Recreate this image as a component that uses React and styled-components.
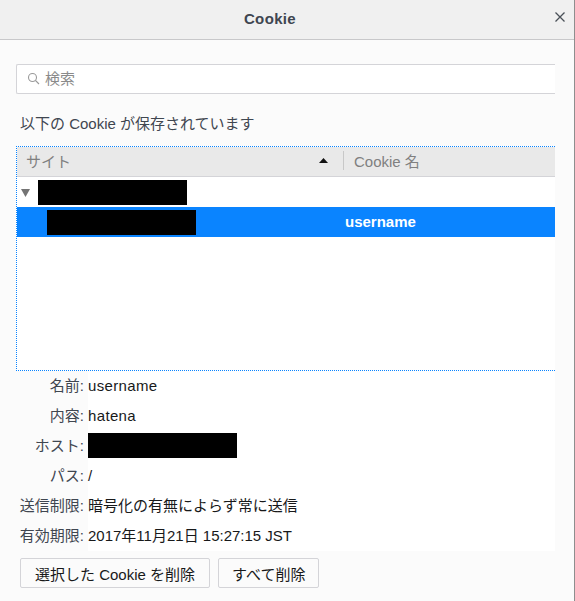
import React from "react";
import styled, { createGlobalStyle } from "styled-components";

const Global = createGlobalStyle`
  html, body { margin: 0; padding: 0; background: #fbfbfb; }
  * { box-sizing: border-box; }
`;
const FONT = `"Liberation Sans", "Noto Sans CJK JP", sans-serif`;

const Dialog = styled.div`
  width: 575px; height: 601px; overflow: hidden; display: flex; flex-direction: column;
  background: #fbfbfb; border-right: 1px solid #8e8e8e; font-family: ${FONT};
  font-size: 15px; color: #3f4650;
`;
const TitleBar = styled.header`
  height: 40px; flex: none; display: flex; align-items: center; justify-content: center; position: relative;
  background: #f0f0f0; border-bottom: 1px solid #c8c8ca; padding: 0 34px 3px 0;
  font-weight: 700; font-size: 15px; letter-spacing: 0.35px; color: #3f4650;
`;
const Close = styled.svg`
  position: absolute; right: 8px; top: 11px; width: 12px; height: 12px;
`;
const Body = styled.main`
  flex: 1; padding: 24px 0 0 16px; display: flex; flex-direction: column; min-height: 0;
`;
const Search = styled.div`
  width: 539px; height: 30px; flex: none; display: flex; align-items: center; gap: 5px; padding: 0 0 3px 10px;
  background: #fff; border: 1px solid #d4d4d8; border-right: 0; border-radius: 2px 0 0 2px;
  color: #8a8a8a;
`;
const SearchIcon = styled.svg`
  width: 13px; height: 13px; flex: none; margin-top: 2px;
`;
const Caption = styled.p`
  margin: 20px 0 0 4px; height: 20px; line-height: 20px; color: #3f4650; flex: none;
`;
const Tree = styled.section`
  width: 539px; height: 225px; margin-top: 12px; flex: none; display: flex; flex-direction: column;
  background: #fff; border-top: 1px dotted #0a84ff; border-left: 1px dotted #0a84ff; border-bottom: 1px dotted #0a84ff;
`;
const TreeHead = styled.div`
  height: 30px; flex: none; display: flex; align-items: center; background: #e9e9e9;
  border-bottom: 1px solid #d4d4d8; color: #808080; padding-bottom: 2px;
`;
const SiteCol = styled.div`
  width: 326px; height: 100%; display: flex; align-items: center; justify-content: space-between;
  padding: 0 15px 0 9px;
`;
const Sep = styled.div`
  width: 1px; height: 19px; background: #c8c8c8; flex: none;
`;
const CookieCol = styled.div`
  padding-left: 10px;
`;
const Row = styled.div`
  height: 30px; flex: none; display: flex; align-items: center; position: relative;
  background: ${p => (p.$selected ? "#0a84ff" : "#fff")};
  color: #fff; font-weight: 700;
`;
const Twisty = styled.svg`
  margin-left: 4px; width: 10px; height: 9px; flex: none;
`;
const Redact = styled.div`
  width: 149px; height: 25px; background: #000; flex: none;
  margin-left: ${p => p.$ml || 0}px;
  margin-bottom: ${p => p.$mb || 0}px;
`;
const RowValue = styled.div`
  position: absolute; left: 328px; top: 0; height: 30px; line-height: 30px;
`;
const Details = styled.dl`
  margin: 0; flex: none; display: grid; grid-template-columns: 72px 467px; grid-auto-rows: 30px;
`;
const Label = styled.dt`
  margin: 0; text-align: right; line-height: 30px; color: #3f4650; padding-right: 4px; white-space: nowrap;
`;
const Value = styled.dd`
  margin: 0; background: #fff; color: #18191a; line-height: 30px; white-space: nowrap;
  display: flex; align-items: center; letter-spacing: ${p => p.$tracking || 0}px;
`;
const Actions = styled.div`
  display: flex; gap: 8px; margin: 7px 0 0 4px;
`;
const Button = styled.button`
  height: 30px; padding: 0 ${p => p.$pad || 14}px; background: #fbfbfb; border: 1px solid #d4d4d8; border-radius: 2px;
  font-family: ${FONT}; font-size: 15px; color: #18191a;
`;

export default function App() {
  return (
    <Dialog>
      <Global />
      <TitleBar>
        Cookie
        <Close viewBox="0 0 12 12"><path d="M1.5 1.5 10.5 10.5M10.5 1.5 1.5 10.5" stroke="#4a5058" strokeWidth="1.3" fill="none" /></Close>
      </TitleBar>
      <Body>
        <Search>
          <SearchIcon viewBox="0 0 13 13" fill="none" stroke="#9a9a9a" strokeWidth="1.1"><circle cx="5.5" cy="5.5" r="4" /><path d="M8.5 8.5 12 12" /></SearchIcon>
          検索
        </Search>
        <Caption>以下の Cookie が保存されています</Caption>
        <Tree>
          <TreeHead>
            <SiteCol>
              サイト
              <svg width="9" height="5" viewBox="0 0 9 5"><path d="M4.5 0 9 5H0z" fill="#111" /></svg>
            </SiteCol>
            <Sep />
            <CookieCol>Cookie 名</CookieCol>
          </TreeHead>
          <Row>
            <Twisty viewBox="0 0 10 9"><path d="M0 1h9L4.5 9z" fill="#747474" /></Twisty>
            <Redact $ml={7} />
          </Row>
          <Row $selected>
            <Redact $ml={30} />
            <RowValue>username</RowValue>
          </Row>
        </Tree>
        <Details>
          <Label>名前:</Label><Value $tracking={0.35}>username</Value>
          <Label>内容:</Label><Value $tracking={0.35}>hatena</Value>
          <Label>ホスト:</Label><Value><Redact $mb={1} /></Value>
          <Label>パス:</Label><Value>/</Value>
          <Label>送信制限:</Label><Value>暗号化の有無によらず常に送信</Value>
          <Label>有効期限:</Label><Value>2017年11月21日 15:27:15 JST</Value>
        </Details>
        <Actions>
          <Button>選択した Cookie を削除</Button>
          <Button $pad={13}>すべて削除</Button>
        </Actions>
      </Body>
    </Dialog>
  );
}
